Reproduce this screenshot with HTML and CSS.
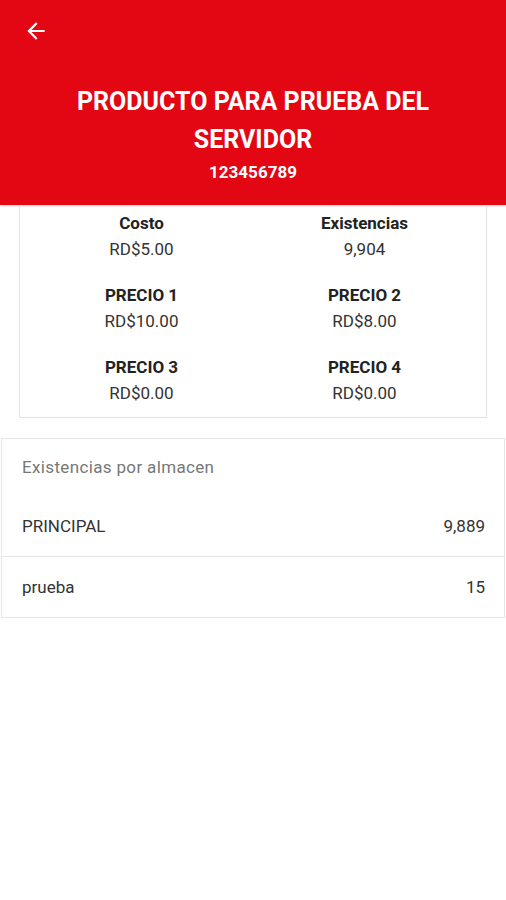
FILE: index.html
```html
<!DOCTYPE html>
<html lang="es">
<head>
  <meta charset="UTF-8">
  <meta name="viewport" content="width=device-width, initial-scale=1.0">
  <title>Producto</title>
  <link rel="stylesheet" href="styles.css">
</head>
<body>

  <div class="header">
    <div class="toolbar">
      <svg class="back" viewBox="0 0 24 24" width="26" height="26">
        <path fill="#fff" d="M20 11H7.83l5.59-5.59L12 4l-8 8 8 8 1.41-1.41L7.83 13H20v-2z"/>
      </svg>
    </div>
    <h1 class="title">PRODUCTO PARA PRUEBA DEL SERVIDOR</h1>
    <div class="code">123456789</div>
  </div>

  <div class="prices">
    <div class="cell">
      <div class="label">Costo</div>
      <div class="value">RD$5.00</div>
    </div>
    <div class="cell">
      <div class="label">Existencias</div>
      <div class="value">9,904</div>
    </div>
    <div class="cell">
      <div class="label">PRECIO 1</div>
      <div class="value">RD$10.00</div>
    </div>
    <div class="cell">
      <div class="label">PRECIO 2</div>
      <div class="value">RD$8.00</div>
    </div>
    <div class="cell">
      <div class="label">PRECIO 3</div>
      <div class="value">RD$0.00</div>
    </div>
    <div class="cell">
      <div class="label">PRECIO 4</div>
      <div class="value">RD$0.00</div>
    </div>
  </div>

  <div class="stock">
    <div class="stock-title">Existencias por almacen</div>
    <div class="stock-row">
      <span>PRINCIPAL</span>
      <span>9,889</span>
    </div>
    <div class="stock-row">
      <span>prueba</span>
      <span>15</span>
    </div>
  </div>

</body>
</html>
```

FILE: styles.css
```css
body {
  margin: 0;
  font-family: Roboto, 'Liberation Sans', sans-serif;
  background-color: #fff;
  color: #222;
}
.header {
  background-color: #e30613;
  height: 205px;
  box-sizing: border-box;
  color: #fff;
  text-align: center;
  box-shadow: 0 1px 2px rgba(0,0,0,0.2);
}
.toolbar {
  height: 83px;
  padding: 18px 0 0 23px;
  box-sizing: border-box;
  text-align: left;
}
.back {
  display: block;
}
.title {
  margin: 0 auto;
  width: 420px;
  font-size: 25px;
  line-height: 38px;
  font-weight: bold;
}
.code {
  font-size: 17px;
  font-weight: bold;
  line-height: 20px;
  margin-top: 3px;
}
.prices {
  margin: 0 19px;
  padding: 8px 10px 14px 10px;
  border: 1px solid #e2e2e2;
  border-top: none;
  display: grid;
  grid-template-columns: 1fr 1fr;
  row-gap: 26px;
  text-align: center;
}
.label {
  font-size: 17px;
  font-weight: bold;
  line-height: 20px;
  color: #222;
}
.value {
  font-size: 17px;
  line-height: 20px;
  margin-top: 6px;
  color: #333;
}
.stock {
  margin: 20px 1px 0 1px;
  border: 1px solid #e6e6e6;
}
.stock-title {
  height: 57px;
  line-height: 57px;
  padding: 0 20px;
  font-size: 17px;
  letter-spacing: 0.35px;
  color: #777;
}
.stock-row {
  display: flex;
  justify-content: space-between;
  height: 60px;
  align-items: center;
  padding: 0 19px 0 20px;
  font-size: 17px;
  color: #333;
}
.stock-row + .stock-row {
  border-top: 1px solid #e6e6e6;
}
```
